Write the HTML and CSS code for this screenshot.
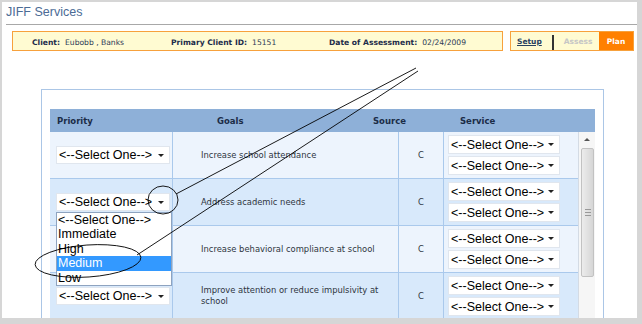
FILE: index.html
```html
<!DOCTYPE html>
<html lang="en">
<head>
    <meta charset="UTF-8">
    <title>JIFF Services</title>
    <link rel="stylesheet" href="styles.css">
</head>
<body>
    <div class="page">
        <div class="title">JIFF Services</div>

        <div class="topbar">
            <div class="client-info">
                <div class="field"><span class="label">Client:</span><span class="value">Eubobb , Banks</span></div>
                <div class="field"><span class="label">Primary Client ID:</span><span class="value">15151</span></div>
                <div class="field"><span class="label">Date of Assessment:</span><span class="value">02/24/2009</span></div>
            </div>
            <div class="tabs">
                <a class="tab setup">Setup</a>
                <span class="tab-divider"></span>
                <span class="tab assess">Assess</span>
                <span class="tab plan">Plan</span>
            </div>
        </div>

        <div class="plan-box">
            <div class="plan-table">
                <div class="plan-head">
                    <div>Priority</div>
                    <div>Goals</div>
                    <div>Source</div>
                    <div>Service</div>
                </div>
                <div class="plan-body">
                    <div class="rows">
                        <div class="row light">
                            <div class="cell priority"><div class="select">&lt;--Select One--&gt;</div></div>
                            <div class="cell goal">Increase school attendance</div>
                            <div class="cell source">C</div>
                            <div class="cell service">
                                <div class="select small">&lt;--Select One--&gt;</div>
                                <div class="select small">&lt;--Select One--&gt;</div>
                            </div>
                        </div>
                        <div class="row dark">
                            <div class="cell priority">
                                <div class="select">&lt;--Select One--&gt;</div>
                                <div class="options">
                                    <div>&lt;--Select One--&gt;</div>
                                    <div>Immediate</div>
                                    <div>High</div>
                                    <div class="active">Medium</div>
                                    <div>Low</div>
                                </div>
                            </div>
                            <div class="cell goal">Address academic needs</div>
                            <div class="cell source">C</div>
                            <div class="cell service">
                                <div class="select small">&lt;--Select One--&gt;</div>
                                <div class="select small">&lt;--Select One--&gt;</div>
                            </div>
                        </div>
                        <div class="row light">
                            <!-- this select sits under the open list above -->
                            <div class="cell priority"><div class="select covered">&lt;--Select One--&gt;</div></div>
                            <div class="cell goal">Increase behavioral compliance at school</div>
                            <div class="cell source">C</div>
                            <div class="cell service">
                                <div class="select small">&lt;--Select One--&gt;</div>
                                <div class="select small">&lt;--Select One--&gt;</div>
                            </div>
                        </div>
                        <div class="row dark">
                            <div class="cell priority"><div class="select">&lt;--Select One--&gt;</div></div>
                            <div class="cell goal">Improve attention or reduce impulsivity at school</div>
                            <div class="cell source">C</div>
                            <div class="cell service">
                                <div class="select small">&lt;--Select One--&gt;</div>
                                <div class="select small">&lt;--Select One--&gt;</div>
                            </div>
                        </div>
                    </div>
                    <div class="scrollbar">
                        <div class="scroll-up"></div>
                        <div class="thumb"><span class="grip"></span></div>
                    </div>
                </div>
            </div>
        </div>

        <!-- callout annotations drawn over the screen -->
        <svg class="callouts" width="642" height="324" viewBox="0 0 642 324">
            <line x1="416" y1="68" x2="176" y2="194" />
            <line x1="418" y1="71" x2="137" y2="255" />
            <ellipse cx="163" cy="200" rx="15" ry="14" />
            <ellipse cx="88" cy="261" rx="53" ry="16" transform="rotate(-4 88 261)" />
        </svg>
    </div>
</body>
</html>
```

FILE: styles.css
```css
body {
    margin: 0;
    background: #d6d6d6;
    font-family: "DejaVu Sans", Verdana, sans-serif;
}

.page {
    position: relative;
    margin: 2px 0 0 2px;
    width: 635px;
    height: 316px;
    background: #fff;
    overflow: hidden;
}

.title {
    margin-left: 4px;
    height: 22px;
    line-height: 21px;
    font-family: "Liberation Sans", Arial, sans-serif;
    font-size: 12.5px;
    color: #4b6b95;
    border-bottom: 1px solid #a8a8a8;
}

/* client bar + tabs */
.topbar {
    display: flex;
    margin: 6px 0 0 10px;
}

.client-info {
    width: 491px;
    height: 20px;
    box-sizing: border-box;
    border: 1px solid #f7a13c;
    background: #fffbd2;
    display: grid;
    grid-template-columns: 139px 158px auto;
    align-items: center;
    padding: 2px 0 0 19px;
    font-size: 7.6px;
}

.label {
    font-weight: bold;
    color: #1d2c4a;
    margin-right: 5px;
}

.value {
    color: #2c3a55;
}

.tabs {
    margin-left: 7px;
    width: 124px;
    height: 20px;
    box-sizing: border-box;
    border: 1px solid #f7a13c;
    background: #fffbd2;
    display: flex;
    align-items: center;
    font-size: 7.5px;
    font-weight: bold;
}

.setup {
    margin-left: 6px;
    color: #27405f;
    text-decoration: underline;
    padding-top: 1px;
}

.tab-divider {
    width: 2px;
    height: 15px;
    margin-left: 10px;
    margin-top: 2px;
    background: #333;
}

.assess {
    margin-left: 10px;
    color: #c6c6c6;
}

.plan {
    margin-left: auto;
    align-self: stretch;
    width: 34px;
    background: #ff8000;
    color: #fff;
    display: flex;
    align-items: center;
    justify-content: center;
}

/* plan table */
.plan-box {
    margin: 38px 0 0 39px;
    width: 563px;
    height: 400px;
    box-sizing: border-box;
    border: 1px solid #abc6e6;
    padding: 19px 8px 0 8px;
}

.plan-head {
    display: grid;
    grid-template-columns: 160px 156px 87px 1fr;
    height: 23px;
    padding-left: 7px;
    align-items: center;
    background: #8eb0d8;
    font-size: 8.5px;
    font-weight: bold;
    color: #1b2c47;
}

.plan-body {
    display: flex;
}

.rows {
    flex: 1;
}

.row {
    display: grid;
    grid-template-columns: 123px 226px 45px 1fr;
    height: 47px;
    box-sizing: border-box;
    border-bottom: 1px solid #aac9ec;
}

.row.light {
    background: #edf4fd;
}

.row.dark {
    background: #d8e9fb;
}

.cell {
    border-right: 1px solid #aac9ec;
    display: flex;
    align-items: center;
}

.priority {
    position: relative;
    padding-left: 6px;
}

.goal {
    padding: 0 6px 0 28px;
    font-size: 8.4px;
    line-height: 11px;
    color: #2e3440;
}

.source {
    justify-content: center;
    font-size: 8.4px;
    color: #2e3440;
}

.service {
    flex-direction: column;
    align-items: flex-start;
    justify-content: center;
    gap: 2px;
    padding-left: 4px;
    border-right: none;
}

.select {
    width: 114px;
    height: 18px;
    box-sizing: border-box;
    border: 1px solid #e0e6ee;
    background: #fff;
    display: flex;
    align-items: center;
    padding-left: 2px;
    font-family: "Liberation Sans", Arial, sans-serif;
    font-size: 12.5px;
    color: #000;
}

.select::after {
    content: "";
    margin-left: auto;
    margin-right: 5px;
    border-left: 3px solid transparent;
    border-right: 3px solid transparent;
    border-top: 3px solid #222;
}

.select.small {
    width: 112px;
    height: 19px;
}

.select.covered {
    visibility: hidden;
}

.options {
    position: absolute;
    left: 6px;
    top: 33px;
    width: 116px;
    box-sizing: border-box;
    border: 1px solid #8ea3bf;
    background: #fff;
    font-family: "Liberation Sans", Arial, sans-serif;
    font-size: 12.5px;
    z-index: 2;
}

.options div {
    height: 14.4px;
    line-height: 14.4px;
    padding-left: 1px;
}

.options .active {
    background: #3399ff;
    color: #fff;
}

/* fake scrollbar */
.scrollbar {
    width: 17px;
    background: #f6f6f6;
    border-left: 1px solid #d4dbe4;
    box-sizing: border-box;
}

.scroll-up {
    height: 15px;
    position: relative;
}

.scroll-up::after {
    content: "";
    position: absolute;
    left: 5px;
    top: 6px;
    border-left: 3px solid transparent;
    border-right: 3px solid transparent;
    border-bottom: 3px solid #555;
}

.thumb {
    height: 127px;
    margin: 1px 1px 0 2px;
    border: 1px solid #c2c2c2;
    border-radius: 2px;
    background: linear-gradient(to right, #ececec, #d6d6d6);
    display: flex;
    align-items: center;
    justify-content: center;
}

.grip {
    width: 6px;
    height: 5px;
    border-top: 1px solid #999;
    border-bottom: 1px solid #999;
    position: relative;
}

.grip::after {
    content: "";
    position: absolute;
    left: 0;
    right: 0;
    top: 2px;
    border-top: 1px solid #999;
}

.callouts {
    position: absolute;
    left: -2px;
    top: -2px;
    z-index: 3;
    pointer-events: none;
}

.callouts line,
.callouts ellipse {
    stroke: #000;
    stroke-width: 0.9;
    fill: none;
}
```
